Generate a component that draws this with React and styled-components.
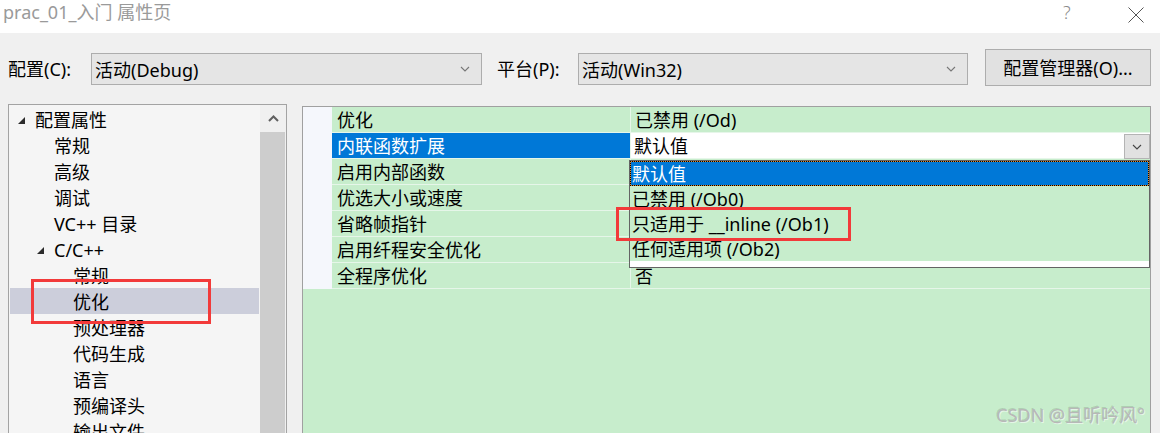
import React from "react";
import styled, { createGlobalStyle } from "styled-components";

const Global = createGlobalStyle`
  html, body { margin: 0; padding: 0; }
  body { background: #f0f0f0; }
  * { box-sizing: border-box; }
`;

const FONT = `"Noto Sans", "Noto Sans CJK SC", sans-serif`;

const Window = styled.div`
  position: relative;
  width: 1160px;
  height: 433px;
  overflow: hidden;
  background: #f0f0f0;
  font-family: ${FONT};
  font-size: 18px;
  color: #000;
`;

const TitleBar = styled.div`
  height: 33px;
  background: #fff;
  display: flex;
  align-items: flex-start;
  padding-left: 3px;
`;

const TitleText = styled.div`
  flex: 1;
  font-size: 18px;
  line-height: 24px;
  color: #9a9a9a;
`;

const HelpGlyph = styled.div`
  width: 20px;
  font-size: 18px;
  line-height: 24px;
  color: #8a8a8a;
  font-weight: 300;
  margin-right: 45px;
`;

const CloseBox = styled.div`
  width: 32px;
  padding-top: 4px;
`;

const Toolbar = styled.div`
  height: 71px;
  display: flex;
  align-items: center;
  padding-left: 8px;
`;

const Label = styled.div`
  width: ${(p) => p.$w}px;
  line-height: 24px;
  padding-top: 1px;
  margin-left: ${(p) => p.$ml || 0}px;
`;

const Combo = styled.div`
  width: ${(p) => p.$w}px;
  height: 32px;
  background: #e5e5e5;
  border: 1px solid #adadad;
  display: flex;
  align-items: center;
  padding-left: 3px;
  padding-right: 11px;
  margin-top: 1px;
`;

const ComboText = styled.div`
  flex: 1;
  line-height: 24px;
  padding-top: 1px;
`;

const ManagerButton = styled.button`
  margin-left: 17px;
  width: 166px;
  height: 37px;
  margin-top: -3px;
  background: #e1e1e1;
  border: 1px solid #adadad;
  font-family: ${FONT};
  font-size: 18px;
  color: #000;
  padding: 0;
`;

const Main = styled.div`
  display: flex;
  align-items: flex-start;
  padding-left: 8px;
  gap: 15px;
`;

const Tree = styled.div`
  width: 279px;
  height: 345px;
  border: 1px solid #a3a3a3;
  display: flex;
  background: #f5f5f5;
`;

const TreeList = styled.div`
  flex: 1;
  padding-top: 1px;
`;

const TreeRow = styled.div`
  height: 26px;
  display: flex;
  align-items: center;
  padding-left: ${(p) => 8 + p.$level * 19}px;
  margin: 0 1px;
  background: ${(p) => (p.$selected ? "#cccedb" : "transparent")};
  line-height: 26px;
  white-space: nowrap;
`;

const TreeText = styled.span`
  padding-top: 2px;
  line-height: 24px;
`;

const Expander = styled.div`
  width: 17px;
  display: flex;
  align-items: center;
  padding-top: 2px;
`;

const ScrollBar = styled.div`
  width: 26px;
  background: #f0f0f0;
  display: flex;
  flex-direction: column;
`;

const ScrollArrow = styled.div`
  height: 27px;
  display: flex;
  align-items: center;
  justify-content: center;
`;

const ScrollThumb = styled.div`
  flex: 1;
  margin-right: 1px;
  background: #cdcdcd;
`;

const Grid = styled.div`
  position: relative;
  margin-top: 2px;
  width: 849px;
  height: 345px;
  border: 1px solid #a0a0a0;
  background: #c7edcc;
`;

const GridRow = styled.div`
  display: grid;
  grid-template-columns: 29px 298px 1px 519px;
  height: 26px;
`;

const Margin = styled.div`
  background: #f5f7fc;
`;

const NameCell = styled.div`
  height: 26px;
  padding: 2px 0 0 5px;
  line-height: 23px;
  border-bottom: 1px solid #e6f6e9;
  background: ${(p) => (p.$selected ? "#0078d7" : "transparent")};
  color: ${(p) => (p.$selected ? "#fff" : "#000")};
  white-space: nowrap;
`;

const ColSep = styled.div`
  background: #e6f6e9;
`;

const ValueCell = styled.div`
  height: 26px;
  padding: 2px 0 0 4px;
  line-height: 23px;
  border-bottom: 1px solid #e6f6e9;
  white-space: nowrap;
`;

const EditCell = styled.div`
  height: 26px;
  display: flex;
  background: #fff;
  border-bottom: 1px solid #e6f6e9;
`;

const EditText = styled.div`
  flex: 1;
  padding: 2px 0 0 3px;
  line-height: 23px;
`;

const EditButton = styled.div`
  width: 26px;
  height: 25px;
  margin-top: 1px;
  background: #e1e1e1;
  border: 1px solid #b4b4b4;
  display: flex;
  align-items: center;
  justify-content: center;
`;

const DropList = styled.div`
  position: absolute;
  left: 326px;
  top: 53px;
  width: 521px;
  height: 108px;
  border: 1px solid #646464;
  background: #fff;
`;

const DropItems = styled.div`
  background: #c7edcc;
`;

const FocusFrame = styled.div`
  border: 1px dotted #000;
  background: #e08a2e;
`;

const DropItem = styled.div`
  height: ${(p) => (p.$focused ? 23 : 25)}px;
  padding: 2px 0 0 ${(p) => (p.$focused ? 1 : 2)}px;
  line-height: ${(p) => (p.$focused ? 21 : 23)}px;
  background: ${(p) => (p.$focused ? "#0078d7" : "transparent")};
  color: ${(p) => (p.$focused ? "#fff" : "#000")};
  white-space: nowrap;
`;

const Annotation = styled.div`
  position: absolute;
  left: ${(p) => p.$x}px;
  top: ${(p) => p.$y}px;
  width: ${(p) => p.$w}px;
  height: ${(p) => p.$h}px;
  border: 3px solid #f23a3a;
  pointer-events: none;
`;

const Watermark = styled.div`
  position: absolute;
  right: 15px;
  bottom: 7px;
  font-family: ${FONT};
  font-size: 18px;
  line-height: 22px;
  color: #b8b8b8;
  text-shadow: 1px 1px 0 rgba(255, 255, 255, 0.55), -1px -1px 0 rgba(0, 0, 0, 0.12);
`;

const Chevron = ({ color = "#555" }) => (
  <svg width="10" height="6" viewBox="0 0 10 6">
    <polyline points="1,1 5,5 9,1" fill="none" stroke={color} strokeWidth="1.1" />
  </svg>
);

const Triangle = () => (
  <svg width="7" height="7" viewBox="0 0 7 7">
    <polygon points="7,0 7,7 0,7" fill="#2b2b2b" />
  </svg>
);

const treeItems = [
  { t: "配置属性", l: 0, exp: true },
  { t: "常规", l: 1 },
  { t: "高级", l: 1 },
  { t: "调试", l: 1 },
  { t: "VC++ 目录", l: 1 },
  { t: "C/C++", l: 1, exp: true },
  { t: "常规", l: 2 },
  { t: "优化", l: 2, sel: true },
  { t: "预处理器", l: 2 },
  { t: "代码生成", l: 2 },
  { t: "语言", l: 2 },
  { t: "预编译头", l: 2 },
  { t: "输出文件", l: 2 },
];

const props = [
  { n: "优化", v: "已禁用 (/Od)" },
  { n: "内联函数扩展", v: "默认值", edit: true },
  { n: "启用内部函数", v: "" },
  { n: "优选大小或速度", v: "" },
  { n: "省略帧指针", v: "" },
  { n: "启用纤程安全优化", v: "" },
  { n: "全程序优化", v: "否" },
];

const options = ["已禁用 (/Ob0)", "只适用于 __inline (/Ob1)", "任何适用项 (/Ob2)"];

export default function App() {
  return (
    <Window>
      <Global />
      <TitleBar>
        <TitleText>prac_01_入门 属性页</TitleText>
        <HelpGlyph>?</HelpGlyph>
        <CloseBox>
          <svg width="16" height="16" viewBox="0 0 16 16">
            <path d="M0.5 0.5 L15.5 15.5 M15.5 0.5 L0.5 15.5" stroke="#555" strokeWidth="1" />
          </svg>
        </CloseBox>
      </TitleBar>

      <Toolbar>
        <Label $w={83}>配置(C):</Label>
        <Combo $w={391}>
          <ComboText>活动(Debug)</ComboText>
          <Chevron color="#777" />
        </Combo>
        <Label $w={81} $ml={15}>平台(P):</Label>
        <Combo $w={390}>
          <ComboText>活动(Win32)</ComboText>
          <Chevron color="#777" />
        </Combo>
        <ManagerButton>配置管理器(O)...</ManagerButton>
      </Toolbar>

      <Main>
        <Tree>
          <TreeList>
            {treeItems.map((it, i) => (
              <TreeRow key={i} $level={it.l} $selected={it.sel}>
                <Expander>{it.exp && <Triangle />}</Expander>
                <TreeText>{it.t}</TreeText>
              </TreeRow>
            ))}
          </TreeList>
          <ScrollBar>
            <ScrollArrow>
              <svg width="11" height="7" viewBox="0 0 11 7">
                <polyline points="1,6 5.5,1.5 10,6" fill="none" stroke="#606060" strokeWidth="2" />
              </svg>
            </ScrollArrow>
            <ScrollThumb />
          </ScrollBar>
        </Tree>

        <Grid>
          {props.map((p, i) => (
            <GridRow key={i}>
              <Margin />
              <NameCell $selected={p.edit}>{p.n}</NameCell>
              <ColSep />
              {p.edit ? (
                <EditCell>
                  <EditText>{p.v}</EditText>
                  <EditButton>
                    <Chevron color="#444" />
                  </EditButton>
                </EditCell>
              ) : (
                <ValueCell>{p.v}</ValueCell>
              )}
            </GridRow>
          ))}
          <DropList>
            <DropItems>
              <FocusFrame>
                <DropItem $focused>默认值</DropItem>
              </FocusFrame>
              {options.map((o) => (
                <DropItem key={o}>{o}</DropItem>
              ))}
            </DropItems>
          </DropList>
        </Grid>
      </Main>

      <Annotation $x={31} $y={279} $w={180} $h={45} />
      <Annotation $x={616} $y={207} $w={235} $h={34} />
      <Watermark>CSDN @且听吟风°</Watermark>
    </Window>
  );
}
